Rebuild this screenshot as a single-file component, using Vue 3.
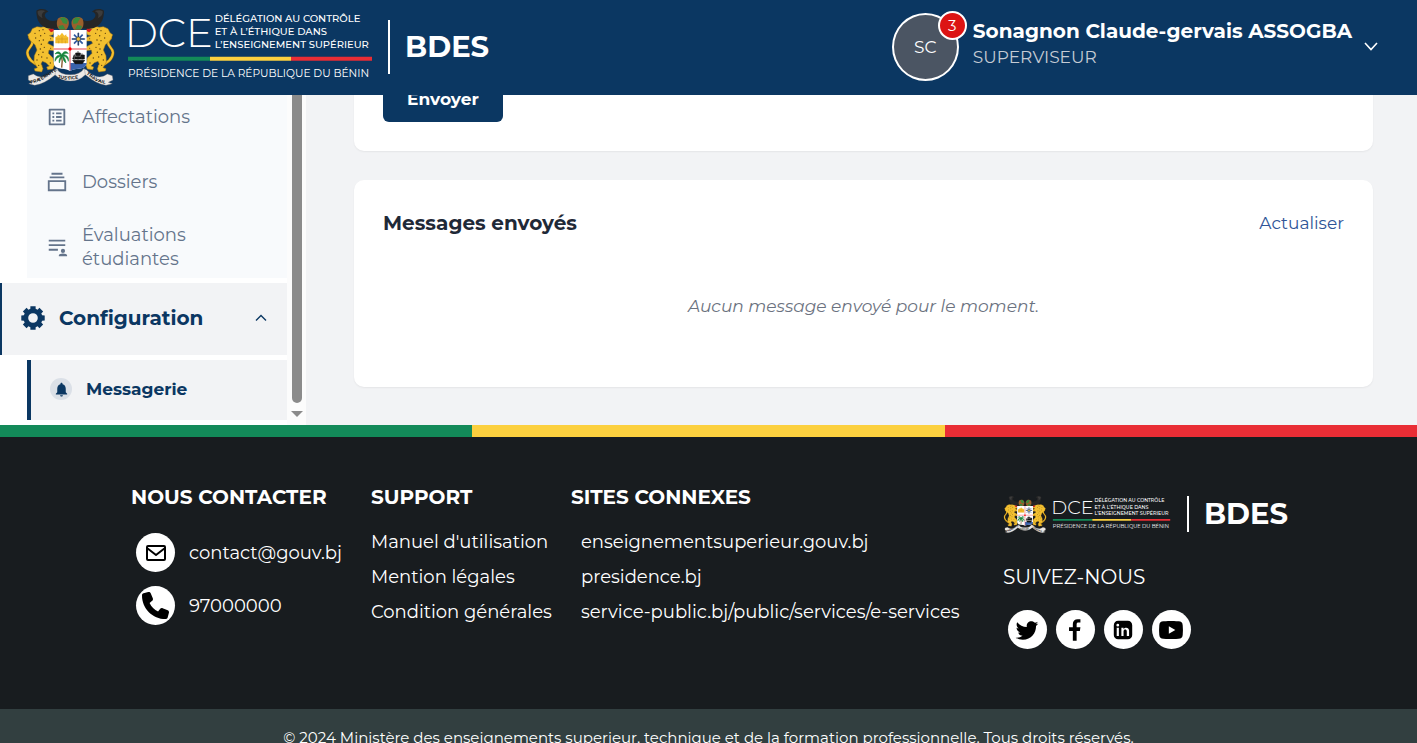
<template>
    <div class="page">
        <!-- armoiries, partagées par l'en-tête et le pied de page -->
        <svg class="defs" aria-hidden="true">
            <defs>
                <g id="leopard">
                    <path
                        d="M124 196C100 190 84 174 83 156C83 142 99 138 98 124C97 117 91 116 90 111"
                        fill="none" stroke="#8a6210" stroke-width="9" stroke-linecap="round"
                    />
                    <path
                        d="M124 196C100 190 84 174 83 156C83 142 99 138 98 124C97 117 91 116 90 111"
                        fill="none" stroke="#f3c030" stroke-width="6" stroke-linecap="round"
                    />
                    <path
                        d="M98 84L112 78L124 80L138 77L152 82L163 92L160 102L149 105L164 111L164 121L148 121L144 128L164 139L164 150L148 148L146 158L160 172L164 194L160 205L144 207L141 199L149 196L139 186L128 182L124 190L130 204L126 214L106 211L104 204L113 201L103 184L104 165L112 148L106 132L98 126L89 115L84 102L92 96Z"
                        fill="#f3c030" stroke="#a87814" stroke-width="1.5" stroke-linejoin="round"
                    />
                    <path d="M146 86L160 82L164 90L154 95Z" fill="#d51c24" />
                    <g fill="#5b4110">
                        <circle cx="119" cy="90" r="2" /><circle cx="130" cy="87" r="2" />
                        <circle cx="135" cy="98" r="2" /><circle cx="123" cy="105" r="2.2" />
                        <circle cx="119" cy="120" r="2" /><circle cx="131" cy="118" r="2.2" />
                        <circle cx="125" cy="131" r="2.2" /><circle cx="134" cy="140" r="2" />
                        <circle cx="122" cy="145" r="2.2" /><circle cx="130" cy="155" r="2.2" />
                        <circle cx="117" cy="162" r="2" /><circle cx="126" cy="169" r="2" />
                        <circle cx="112" cy="178" r="2" /><circle cx="142" cy="172" r="2" />
                        <circle cx="152" cy="187" r="2" /><circle cx="117" cy="194" r="2" />
                        <circle cx="153" cy="143" r="1.6" /><circle cx="153" cy="114" r="1.6" />
                        <circle cx="106" cy="98" r="2" /><circle cx="108" cy="112" r="2" />
                    </g>
                    <path
                        d="M110 30C110 53 117 70 134 79C150 87 167 84 181 83L183 51C169 64 151 63 141 54C133 47 133 37 146 33C136 22 117 24 110 30Z"
                        fill="#262626"
                    />
                    <path d="M114 32C121 27 130 28 138 32C129 33 123 43 129 53C117 47 113 41 114 32Z" fill="#3c3c3c" />
                    <path d="M174 55C183 46 201 48 206 59C210 69 206 80 200 87H180C170 80 170 66 174 55Z" fill="#9b602c" />
                    <path d="M181 53L193 49L204 59L202 70L190 68L186 60ZM176 76L190 73L197 86H180Z" fill="#3b8a3b" />
                </g>
                <g id="emblem">
                    <use href="#leopard" />
                    <use href="#leopard" transform="translate(423 0) scale(-1 1)" />
                    <path d="M162 88H261V184Q261 203 238 204Q219 205 211 211Q203 205 185 204Q162 203 162 184Z" fill="#fff" />
                    <path d="M212 187H261Q260 203 238 204Q219 205 212 211Z" fill="#3a63ad" />
                    <path d="M211 88V209M162 145H261" stroke="#e11f2b" stroke-width="2.5" />
                    <circle cx="211" cy="145" r="5" fill="#f00" />
                    <path d="M167 128V110L174 106V101L180 105L187 96L194 105L200 101V106L206 110V128Z" fill="#f4bd2d" />
                    <path d="M169 115H205M177 128V120M187 128V108M197 128V120" stroke="#c88c12" stroke-width="1.5" />
                    <g stroke="#315a9f" stroke-width="5">
                        <path d="M236 97V134M217 115H255M223 102L249 129M249 102L223 129" />
                        <path d="M236 95V136M215 115H257" stroke="#222" stroke-width="1.5" />
                    </g>
                    <circle cx="236" cy="115" r="6" fill="#edc03e" stroke="#222" />
                    <path d="M185 164Q190 181 186 201" fill="none" stroke="#845326" stroke-width="4" />
                    <path
                        d="M186 163C181 151 172 151 166 160C175 156 180 160 182 163C171 163 165 172 166 182C171 172 178 168 184 167C178 174 177 181 179 187C182 177 185 171 188 168C190 176 193 183 199 187C198 178 195 171 191 167C199 167 204 173 206 182C209 170 201 162 191 162C196 158 201 157 206 159C201 149 190 151 186 163Z"
                        fill="#16843b" stroke="#16843b" stroke-width="1.5"
                    />
                    <path
                        d="M219 179H255L248 189H226ZM224 177V162L219 175M235 177V151M247 177V158M228 157H242V165H228ZM226 168H244V175H226ZM244 163H254V175H245Z"
                        fill="#151515" stroke="#151515" stroke-width="2"
                    />
                    <g fill="#ece9e6" stroke="#77716f" stroke-width="1">
                        <path d="M86 225L101 220Q129 243 164 207L173 204L181 219L166 223Q134 250 105 254L87 249L98 245L86 238Z" />
                        <path d="M338 225L323 220Q295 243 260 207L251 204L243 219L258 223Q290 250 319 254L338 249L326 245L340 238Z" />
                        <path d="M169 204Q182 222 212 222Q240 222 254 204L257 222Q239 241 212 241Q184 241 166 222Z" />
                    </g>
                    <g class="motto">
                        <text transform="translate(93 249) rotate(-14)">FRA</text>
                        <text transform="translate(119 243) rotate(-32)">TERNITÉ</text>
                        <text transform="translate(174 232) rotate(12)">JUS</text>
                        <text transform="translate(204 238) rotate(-8)">TICE</text>
                        <text transform="translate(260 221) rotate(36)">TRAV</text>
                        <text transform="translate(294 244) rotate(15)">AIL</text>
                    </g>
                </g>
                <g id="wordmark">
                    <text class="dce" x="-10" y="117">DCE</text>
                    <g class="small">
                        <text x="260" y="43">DÉLÉGATION AU CONTRÔLE</text>
                        <text x="260" y="82">ET À L’ÉTHIQUE DANS</text>
                        <text x="260" y="121">L’ENSEIGNEMENT SUPÉRIEUR</text>
                        <text class="light" x="0" y="206">PRÉSIDENCE DE LA RÉPUBLIQUE DU BÉNIN</text>
                    </g>
                    <path d="M0 146H246V158H0Z" fill="#138a59" />
                    <path d="M246 146H489V158H246Z" fill="#fcd03f" />
                    <path d="M489 146H732V158H489Z" fill="#e92d35" />
                </g>
            </defs>
        </svg>

        <header class="topbar">
            <a class="brand" href="#">
                <svg class="logo" viewBox="0 0 1038 237" role="img" aria-label="DCE Bénin">
                    <use href="#emblem" transform="translate(-82 -19)" />
                    <use href="#wordmark" transform="translate(303 3)" />
                </svg>
                <span class="brand-name">BDES</span>
            </a>
            <button class="user" type="button">
                <span class="avatar">SC<span class="badge">3</span></span>
                <span class="user-info">
                    <strong>Sonagnon Claude-gervais ASSOGBA</strong>
                    <span class="role">SUPERVISEUR</span>
                </span>
                <svg width="14" height="9" viewBox="0 0 14 9" fill="none" stroke="#fff" stroke-width="1.6">
                    <path d="M1 1L7 7.5L13 1" />
                </svg>
            </button>
        </header>

        <div class="body">
            <aside class="sidebar">
                <nav class="menu">
                    <div class="submenu">
                        <a v-for="item in items" :key="item.label" class="item" href="#">
                            <svg class="item-icon" viewBox="0 0 24 24" fill="currentColor"><path :d="item.icon" /></svg>
                            <span>{{ item.label }}</span>
                        </a>
                    </div>
                    <button class="group" type="button" @click="open = !open">
                        <svg class="gear" viewBox="0 0 24 24" fill="currentColor" fill-rule="evenodd">
                            <path :d="gearPath" />
                        </svg>
                        <span>Configuration</span>
                        <svg class="caret" :class="{ closed: !open }" viewBox="0 0 12 8" fill="none" stroke="currentColor" stroke-width="1.4">
                            <path d="M1 6.5L6 1.5L11 6.5" />
                        </svg>
                    </button>
                    <a v-show="open" class="item active" href="#">
                        <span class="bell">
                            <svg viewBox="0 0 24 24" fill="currentColor"><path :d="bellPath" /></svg>
                        </span>
                        <span>Messagerie</span>
                    </a>
                </nav>
                <div class="scrollbar">
                    <div class="thumb"></div>
                    <svg width="12" height="6" viewBox="0 0 12 6"><path d="M0 0H12L6 6Z" fill="#8b8b8b" /></svg>
                </div>
            </aside>

            <main class="content">
                <section class="card">
                    <button class="send" type="button">Envoyer</button>
                </section>
                <section class="card">
                    <div class="card-head">
                        <h2>Messages envoyés</h2>
                        <button class="refresh" type="button">Actualiser</button>
                    </div>
                    <p class="empty">Aucun message envoyé pour le moment.</p>
                </section>
            </main>
        </div>

        <footer class="footer">
            <div class="flag"><i class="green"></i><i class="yellow"></i><i class="red"></i></div>
            <div class="columns">
                <div>
                    <h3>NOUS CONTACTER</h3>
                    <ul class="contacts">
                        <li>
                            <span class="round">
                                <svg width="24" height="24" viewBox="0 0 24 24" fill="none" stroke="#000" stroke-width="2" stroke-linejoin="round">
                                    <rect x="3" y="5" width="18" height="14" rx="1" /><path d="M3 7L12 14L21 7" />
                                </svg>
                            </span>
                            <a href="#">contact@gouv.bj</a>
                        </li>
                        <li>
                            <span class="round">
                                <svg width="27" height="27" viewBox="0 0 512 512">
                                    <path d="M164.900 24.600C157.200 6 136.900-3.900 117.500 1.400L29.500 25.400C12.100 30.200 0 46 0 64C0 311.400 200.600 512 448 512C466 512 481.800 499.900 486.600 482.500L510.600 394.500C515.900 375.100 506 354.800 487.400 347.100L391.400 307.100C375.100 300.300 356.200 305 345.100 318.700L304.700 368C234.300 334.700 177.300 277.700 144 207.300L193.300 167C207 155.800 211.700 137 204.900 120.700Z" />
                                </svg>
                            </span>
                            <a href="#">97000000</a>
                        </li>
                    </ul>
                </div>
                <div>
                    <h3>SUPPORT</h3>
                    <ul class="links">
                        <li v-for="l in support" :key="l"><a href="#">{{ l }}</a></li>
                    </ul>
                </div>
                <div>
                    <h3>SITES CONNEXES</h3>
                    <ul class="links indent">
                        <li v-for="l in sites" :key="l"><a href="#">{{ l }}</a></li>
                    </ul>
                </div>
                <div class="social">
                    <a class="brand small-brand" href="#">
                        <svg class="logo" viewBox="0 0 1038 237" role="img" aria-label="DCE Bénin">
                            <use href="#emblem" transform="translate(-82 -19)" />
                            <use href="#wordmark" transform="translate(303 3)" />
                        </svg>
                        <span class="brand-name">BDES</span>
                    </a>
                    <p class="follow">SUIVEZ-NOUS</p>
                    <div class="networks">
                        <a v-for="n in networks" :key="n.name" class="round" href="#" :aria-label="n.name">
                            <svg width="26" height="26" viewBox="0 0 24 24" fill-rule="evenodd"><path :d="n.icon" /></svg>
                        </a>
                    </div>
                </div>
            </div>
            <div class="copyright">
                © 2024 Ministère des enseignements superieur, technique et de la formation professionnelle. Tous droits réservés.
            </div>
        </footer>
    </div>
</template>

<script setup>
import { ref } from 'vue';

const open = ref(true);

const items = [
    {
        label: 'Affectations',
        icon: 'M11 7h6v2h-6zm0 4h6v2h-6zm0 4h6v2h-6zM7 7h2v2H7zm0 4h2v2H7zm0 4h2v2H7zM20.100 3H3.900c-.5 0-.9.4-.9.900v16.200c0 .4.4.9.900.9h16.200c.4 0 .9-.5.900-.9V3.900c0-.5-.5-.9-.9-.9zM19 19H5V5h14v14z',
    },
    { label: 'Dossiers', icon: 'M20 8H4V6h16v2zm-2-6H6v2h12V2zm4 8v12H2V10h20zm-2 2H4v8h16v-8z' },
    {
        label: 'Évaluations étudiantes',
        icon: 'M3 4h18v2H3zM3 9h18v2H3zM3 14h10v2H3zM18.500 14a2.300 2.300 0 1 1 0 4.600a2.300 2.300 0 0 1 0-4.600zM14 22v-1c0-1.200 2.500-2 4.500-2s4.500.8 4.500 2v1z',
    },
];

// roue dentée à 8 dents
function gear(teeth) {
    const step = (Math.PI * 2) / teeth;
    const pts = [];
    for (let i = 0; i < teeth; i++) {
        const a = i * step;
        for (const [r, da] of [[9.5, -0.28], [12, -0.22], [12, 0.22], [9.5, 0.28]]) {
            pts.push(`${(12 + r * Math.cos(a + da)).toFixed(2)} ${(12 + r * Math.sin(a + da)).toFixed(2)}`);
        }
    }
    return `M${pts.join('L')}ZM12 7.200a4.800 4.800 0 1 0 0 9.600a4.800 4.800 0 0 0 0-9.600Z`;
}
const gearPath = gear(8);

const bellPath = 'M12 22c1.100 0 2-.9 2-2h-4c0 1.100.9 2 2 2zm6-6v-5c0-3.070-1.630-5.640-4.500-6.320V4c0-.83-.67-1.500-1.500-1.500s-1.500.67-1.500 1.500v.68C7.640 5.360 6 7.920 6 11v5l-2 2v1h16v-1l-2-2z';

const support = ["Manuel d'utilisation", 'Mention légales', 'Condition générales'];
const sites = ['enseignementsuperieur.gouv.bj', 'presidence.bj', 'service-public.bj/public/services/e-services'];

const networks = [
    {
        name: 'Twitter',
        icon: 'M22.460 6c-.77.35-1.600.58-2.460.69.88-.53 1.560-1.370 1.880-2.380-.83.5-1.750.85-2.720 1.050C18.370 4.500 17.260 4 16 4c-2.350 0-4.270 1.920-4.270 4.290 0 .34.04.67.11.98C8.280 9.090 5.110 7.380 3 4.790c-.37.63-.58 1.370-.58 2.150 0 1.490.75 2.810 1.910 3.560-.71 0-1.370-.2-1.950-.5v.03c0 2.080 1.480 3.820 3.440 4.210a4.220 4.220 0 0 1-1.930.07 4.280 4.280 0 0 0 4 2.980 8.521 8.521 0 0 1-5.330 1.840c-.34 0-.68-.02-1.020-.06C3.440 20.290 5.700 21 8.120 21 16 21 20.330 14.460 20.330 8.790c0-.19 0-.37-.01-.56.84-.6 1.560-1.360 2.140-2.230z',
    },
    { name: 'Facebook', icon: 'M10 22V13H6.500V9.500H10V6.500C10 3.500 11.800 2 14.500 2H17V5H15.200C14 5 13.500 5.600 13.500 6.800V9.500H17L16.500 13H13.500V22Z' },
    {
        name: 'LinkedIn',
        icon: 'M7.500 3.500h9A4 4 0 0 1 20.500 7.500v9a4 4 0 0 1-4 4h-9A4 4 0 0 1 3.500 16.500v-9A4 4 0 0 1 7.500 3.500zM6.200 10v7.500h2V10zM7.200 6.200a1.300 1.300 0 1 0 0 2.600a1.300 1.300 0 0 0 0-2.600zM10.500 10v7.500h2v-4.200c0-2.200 3-2.300 3 0v4.200h2.100v-4.700c0-3.300-3.600-3.600-5.100-1.600V10z',
    },
    {
        name: 'YouTube',
        icon: 'M5 4C12 3.600 12 3.600 19 4C21.500 4.200 22.500 5 22.800 7.500C23.100 10.500 23.100 13.500 22.800 16.500C22.500 19 21.500 19.800 19 20C12 20.400 12 20.400 5 20C2.500 19.800 1.500 19 1.200 16.500C.9 13.500.9 10.500 1.200 7.500C1.500 5 2.500 4.200 5 4zM10 8.500v7l6-3.500z',
    },
];
</script>

<style>
body {
    margin: 0;
}
</style>

<style scoped>
.page {
    height: 100vh;
    overflow: hidden;
    font-family: Montserrat, Inter, "Liberation Sans", sans-serif;
    font-size: 18px;
    line-height: 24px;
    color: #64748b;
}

.page * {
    box-sizing: border-box;
}

a {
    color: inherit;
    text-decoration: none;
}

button {
    border: 0;
    background: none;
    padding: 0;
    font: inherit;
    color: inherit;
    cursor: pointer;
}

h2,
h3,
p,
ul {
    margin: 0;
    padding: 0;
}

ul {
    list-style: none;
}

.defs {
    position: absolute;
    width: 0;
    height: 0;
}

.motto {
    font-size: 14px;
    font-weight: 700;
    fill: #222;
}

.dce {
    font-size: 120px;
    font-weight: 300;
    fill: #fff;
}

.small {
    font-size: 30px;
    font-weight: 500;
    fill: #fff;
}

.light {
    font-size: 32px;
    font-weight: 400;
}

.topbar {
    position: relative;
    z-index: 2;
    display: flex;
    align-items: center;
    justify-content: space-between;
    height: 95px;
    padding: 0 39px 2px 27px;
    background: #0b3762;
    color: #fff;
}

.brand {
    display: flex;
    align-items: center;
    gap: 15px;
    color: #fff;
}

.logo {
    display: block;
    width: 346px;
    height: 79px;
    overflow: visible;
}

.brand-name {
    display: flex;
    align-items: center;
    height: 54px;
    padding-left: 15px;
    border-left: 2px solid #fff;
    font-size: 29px;
    font-weight: 700;
}

.user {
    display: flex;
    align-items: center;
    text-align: left;
}

.avatar {
    position: relative;
    display: flex;
    align-items: center;
    justify-content: center;
    width: 67px;
    height: 68px;
    margin-right: 14px;
    border: 2px solid #fff;
    border-radius: 50%;
    background: #4b5563;
    font-size: 17px;
}

.badge {
    position: absolute;
    top: -4px;
    right: -10px;
    width: 29px;
    height: 29px;
    border: 2px solid #fff;
    border-radius: 50%;
    background: #dc1414;
    font-size: 15px;
    line-height: 25px;
    text-align: center;
}

.user-info {
    display: flex;
    flex-direction: column;
    gap: 2px;
    margin-right: 12px;
    padding-bottom: 5px;
}

.user-info strong {
    font-size: 20px;
}

.role {
    color: #c5cbd4;
    font-size: 17px;
}

.body {
    display: flex;
    margin-top: -12px;
}

.sidebar {
    display: flex;
    flex: 0 0 306px;
    background: #fff;
}

.menu {
    flex: 1;
    display: flex;
    flex-direction: column;
    gap: 5px;
    padding-bottom: 5px;
}

.submenu,
.item.active {
    margin-left: 27px;
}

.submenu {
    background: #f8fafc;
}

.item {
    display: flex;
    align-items: center;
    gap: 14px;
    height: 65px;
    padding: 3px 60px 0 19px;
}

.item-icon {
    flex: none;
    width: 22px;
    height: 22px;
}

.group {
    display: flex;
    align-items: center;
    gap: 14px;
    height: 72px;
    padding: 0 20px 2px 19px;
    border-left: 2px solid #0b3762;
    background: #f2f3f5;
    color: #0b3762;
    font-size: 20px;
    font-weight: 700;
}

.gear {
    width: 24px;
    height: 24px;
}

.caret {
    width: 12px;
    height: 8px;
    margin-left: auto;
}

.caret.closed {
    transform: rotate(180deg);
}

.item.active {
    height: 60px;
    padding: 0 19px 2px;
    border-left: 4px solid #0b3762;
    background: #f2f3f5;
    color: #0b3762;
    font-size: 17px;
    font-weight: 700;
}

.bell {
    display: flex;
    align-items: center;
    justify-content: center;
    width: 22px;
    height: 22px;
    border-radius: 50%;
    background: #dbe0e7;
}

.bell svg {
    width: 17px;
    height: 17px;
}

.scrollbar {
    display: flex;
    flex-direction: column;
    align-items: center;
    gap: 8px;
    width: 19px;
    padding-bottom: 8px;
    background: #fcfcfc;
}

.thumb {
    flex: 1;
    width: 10px;
    border-radius: 5px;
    background: #8b8b8b;
}

.content {
    flex: 1;
    display: flex;
    flex-direction: column;
    gap: 29px;
    padding: 0 44px 38px 48px;
    background: #f2f3f5;
}

.card {
    padding: 29px;
    border-radius: 10px;
    background: #fff;
    box-shadow: 0 1px 2px rgba(0, 0, 0, 0.06);
}

.card:first-child {
    flex: 1;
    display: flex;
    align-items: flex-end;
    padding-top: 0;
}

.send {
    height: 48px;
    margin-top: -20px;
    padding: 2px 24px 0;
    border-radius: 6px;
    background: #0b3762;
    color: #fff;
    font-size: 17px;
    font-weight: 700;
}

.card-head {
    display: flex;
    align-items: center;
    justify-content: space-between;
    height: 28px;
    margin-bottom: 17px;
}

h2 {
    color: #1f2937;
    font-size: 20px;
    font-weight: 700;
}

.refresh {
    color: #2f5597;
    font-size: 17px;
}

.empty {
    padding: 40px 0;
    font-size: 17px;
    font-style: italic;
    text-align: center;
    color: #6b7280;
}

.footer {
    background: #181c1f;
    color: #fff;
}

.flag {
    display: flex;
    height: 12px;
}

.flag i {
    flex: 1;
}

.green {
    background: #138a59;
}

.yellow {
    background: #fcd03f;
}

.red {
    background: #e92d35;
}

.columns {
    display: grid;
    grid-template-columns: 240fr 200fr 432fr 285fr;
    height: 272px;
    padding: 48px 129px 0 131px;
}

h3 {
    font-size: 20px;
    font-weight: 700;
}

.contacts {
    display: flex;
    flex-direction: column;
    gap: 14px;
    padding: 24px 0 0 5px;
}

.contacts li {
    display: flex;
    align-items: center;
    gap: 14px;
}

.round {
    display: flex;
    align-items: center;
    justify-content: center;
    width: 39px;
    height: 39px;
    border-radius: 50%;
    background: #fff;
}

.links {
    display: flex;
    flex-direction: column;
    gap: 11px;
    padding-top: 21px;
}

.links.indent {
    padding-left: 10px;
}

.social {
    padding-top: 10px;
}

.small-brand .logo {
    width: 169px;
    height: 38px;
}

.small-brand .brand-name {
    height: 36px;
}

.follow {
    margin-top: 32px;
    font-size: 20px;
}

.networks {
    display: flex;
    gap: 9px;
    padding: 21px 0 0 5px;
}

.copyright {
    padding: 17px 0;
    background: #323f40;
    font-size: 15px;
    text-align: center;
}
</style>
